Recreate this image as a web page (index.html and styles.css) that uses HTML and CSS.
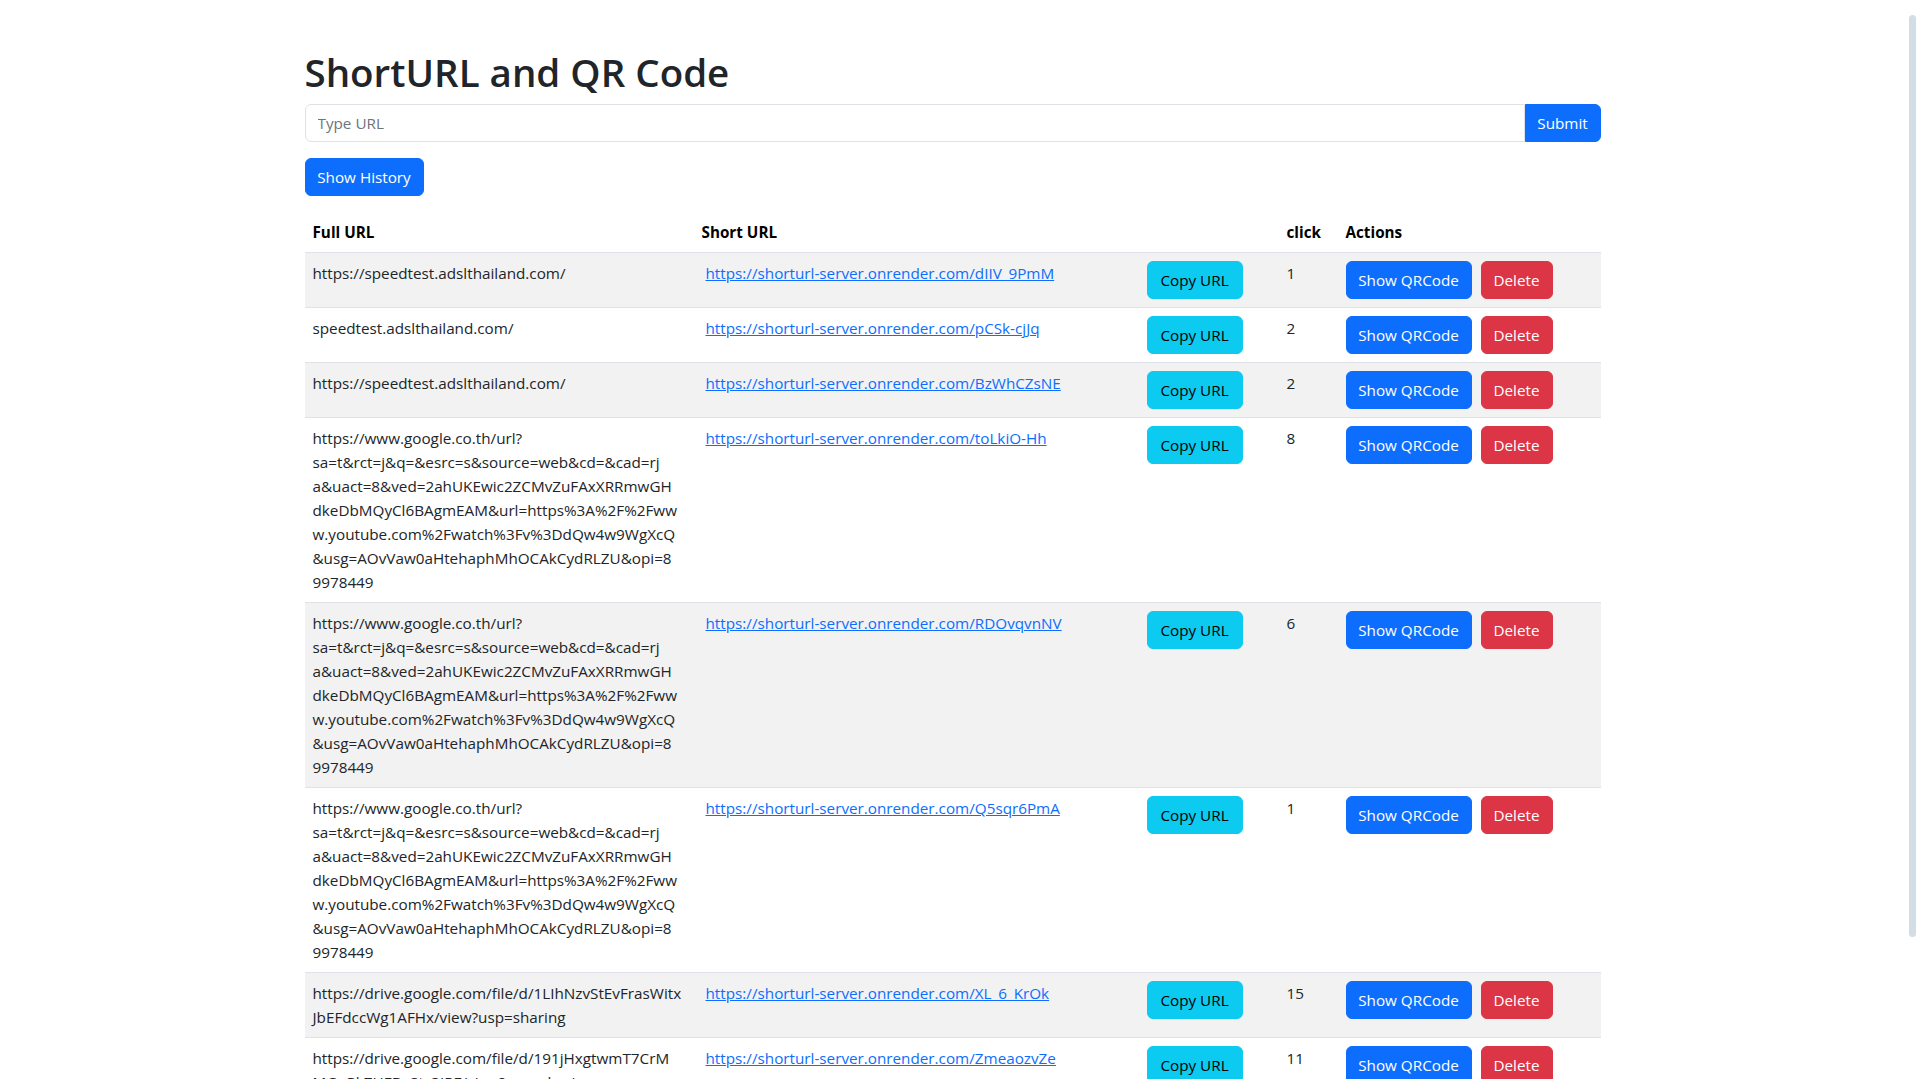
FILE: index.html
```html
<!DOCTYPE html>
<html lang="en">
<head>
<meta charset="utf-8">
<title>ShortURL and QR Code</title>
<link rel="stylesheet" href="styles.css">
</head>
<body>
<div class="page">
  <div class="container">
    <h1 class="title">ShortURL and QR Code</h1>
    <form class="input-group">
      <input class="form-control" type="text" placeholder="Type URL">
      <button class="btn btn-primary btn-submit" type="button">Submit</button>
    </form>
    <button class="btn btn-primary btn-history" type="button">Show History</button>

    <table class="table">
      <colgroup>
        <col class="c-full">
        <col class="c-short">
        <col class="c-copy">
        <col class="c-click">
        <col class="c-actions">
      </colgroup>
      <thead>
        <tr>
          <th>Full URL</th>
          <th>Short URL</th>
          <th></th>
          <th>click</th>
          <th>Actions</th>
        </tr>
      </thead>
      <tbody>
        <tr>
          <td><span class="line">https://speedtest.adslthailand.com/</span></td>
          <td class="short"><a href="#">https://shorturl-server.onrender.com/dIIV_9PmM</a></td>
          <td><button class="btn btn-info" type="button">Copy URL</button></td>
          <td>1</td>
          <td><div class="actions"><button class="btn btn-primary" type="button">Show QRCode</button><button class="btn btn-danger" type="button">Delete</button></div></td>
        </tr>
        <tr>
          <td><span class="line">speedtest.adslthailand.com/</span></td>
          <td class="short"><a href="#">https://shorturl-server.onrender.com/pCSk-cjJq</a></td>
          <td><button class="btn btn-info" type="button">Copy URL</button></td>
          <td>2</td>
          <td><div class="actions"><button class="btn btn-primary" type="button">Show QRCode</button><button class="btn btn-danger" type="button">Delete</button></div></td>
        </tr>
        <tr>
          <td><span class="line">https://speedtest.adslthailand.com/</span></td>
          <td class="short"><a href="#">https://shorturl-server.onrender.com/BzWhCZsNE</a></td>
          <td><button class="btn btn-info" type="button">Copy URL</button></td>
          <td>2</td>
          <td><div class="actions"><button class="btn btn-primary" type="button">Show QRCode</button><button class="btn btn-danger" type="button">Delete</button></div></td>
        </tr>
        <tr>
          <td><span class="line">https://www.google.co.th/url?</span><br><span class="line">sa=t&amp;rct=j&amp;q=&amp;esrc=s&amp;source=web&amp;cd=&amp;cad=rj</span><br><span class="line">a&amp;uact=8&amp;ved=2ahUKEwic2ZCMvZuFAxXRRmwGH</span><br><span class="line">dkeDbMQyCl6BAgmEAM&amp;url=https%3A%2F%2Fww</span><br><span class="line">w.youtube.com%2Fwatch%3Fv%3DdQw4w9WgXcQ</span><br><span class="line">&amp;usg=AOvVaw0aHtehaphMhOCAkCydRLZU&amp;opi=8</span><br><span class="line">9978449</span></td>
          <td class="short"><a href="#">https://shorturl-server.onrender.com/toLkiO-Hh</a></td>
          <td><button class="btn btn-info" type="button">Copy URL</button></td>
          <td>8</td>
          <td><div class="actions"><button class="btn btn-primary" type="button">Show QRCode</button><button class="btn btn-danger" type="button">Delete</button></div></td>
        </tr>
        <tr>
          <td><span class="line">https://www.google.co.th/url?</span><br><span class="line">sa=t&amp;rct=j&amp;q=&amp;esrc=s&amp;source=web&amp;cd=&amp;cad=rj</span><br><span class="line">a&amp;uact=8&amp;ved=2ahUKEwic2ZCMvZuFAxXRRmwGH</span><br><span class="line">dkeDbMQyCl6BAgmEAM&amp;url=https%3A%2F%2Fww</span><br><span class="line">w.youtube.com%2Fwatch%3Fv%3DdQw4w9WgXcQ</span><br><span class="line">&amp;usg=AOvVaw0aHtehaphMhOCAkCydRLZU&amp;opi=8</span><br><span class="line">9978449</span></td>
          <td class="short"><a href="#">https://shorturl-server.onrender.com/RDOvqvnNV</a></td>
          <td><button class="btn btn-info" type="button">Copy URL</button></td>
          <td>6</td>
          <td><div class="actions"><button class="btn btn-primary" type="button">Show QRCode</button><button class="btn btn-danger" type="button">Delete</button></div></td>
        </tr>
        <tr>
          <td><span class="line">https://www.google.co.th/url?</span><br><span class="line">sa=t&amp;rct=j&amp;q=&amp;esrc=s&amp;source=web&amp;cd=&amp;cad=rj</span><br><span class="line">a&amp;uact=8&amp;ved=2ahUKEwic2ZCMvZuFAxXRRmwGH</span><br><span class="line">dkeDbMQyCl6BAgmEAM&amp;url=https%3A%2F%2Fww</span><br><span class="line">w.youtube.com%2Fwatch%3Fv%3DdQw4w9WgXcQ</span><br><span class="line">&amp;usg=AOvVaw0aHtehaphMhOCAkCydRLZU&amp;opi=8</span><br><span class="line">9978449</span></td>
          <td class="short"><a href="#">https://shorturl-server.onrender.com/Q5sqr6PmA</a></td>
          <td><button class="btn btn-info" type="button">Copy URL</button></td>
          <td>1</td>
          <td><div class="actions"><button class="btn btn-primary" type="button">Show QRCode</button><button class="btn btn-danger" type="button">Delete</button></div></td>
        </tr>
        <tr>
          <td><span class="line">https://drive.google.com/file/d/1LIhNzvStEvFrasWitx</span><br><span class="line">JbEFdccWg1AFHx/view?usp=sharing</span></td>
          <td class="short"><a href="#">https://shorturl-server.onrender.com/XL_6_KrOk</a></td>
          <td><button class="btn btn-info" type="button">Copy URL</button></td>
          <td>15</td>
          <td><div class="actions"><button class="btn btn-primary" type="button">Show QRCode</button><button class="btn btn-danger" type="button">Delete</button></div></td>
        </tr>
        <tr>
          <td><span class="line">https://drive.google.com/file/d/191jHxgtwmT7CrM</span><br><span class="line">MGuPkZHFDz8tz3IRF/view?usp=sharing</span></td>
          <td class="short"><a href="#">https://shorturl-server.onrender.com/ZmeaozvZe</a></td>
          <td><button class="btn btn-info" type="button">Copy URL</button></td>
          <td>11</td>
          <td><div class="actions"><button class="btn btn-primary" type="button">Show QRCode</button><button class="btn btn-danger" type="button">Delete</button></div></td>
        </tr>
      </tbody>
    </table>
  </div>
</div>
<div class="scroll-thumb"></div>
</body>
</html>
```

FILE: styles.css
```css
html {
  overflow: hidden;
}

body {
  margin: 0;
  font-family: "Open Sans", "Noto Sans", "Liberation Sans", sans-serif;
  font-size: 15.25px;
  line-height: 24px;
  color: #212529;
  background: #ffffff;
}

.page {
  width: 1905px;
}

.container {
  max-width: 1320px;
  margin: 0 auto;
  padding: 48px 12px 0;
  box-sizing: border-box;
}

.title {
  margin: 0 0 8px;
  font-size: 38.5px;
  line-height: 48px;
  font-weight: 600;
  color: #212529;
}

.input-group {
  display: flex;
  margin: 0;
}

.form-control {
  flex: 1 1 auto;
  height: 38px;
  box-sizing: border-box;
  padding: 6px 12px;
  border: 1px solid #dee2e6;
  border-radius: 6px 0 0 6px;
  font-family: inherit;
  font-size: 15.25px;
  color: #212529;
  outline: none;
}

.form-control::placeholder {
  color: #6c757d;
}

.btn {
  display: inline-block;
  box-sizing: border-box;
  height: 38px;
  padding: 6px 12px;
  border: 1px solid transparent;
  border-radius: 6px;
  font-family: inherit;
  font-size: 15.25px;
  line-height: 24px;
  white-space: nowrap;
  cursor: pointer;
}

.btn-primary {
  background: #0d6efd;
  border-color: #0d6efd;
  color: #ffffff;
}

.btn-info {
  background: #0dcaf0;
  border-color: #0dcaf0;
  color: #000000;
}

.btn-danger {
  background: #dc3545;
  border-color: #dc3545;
  color: #ffffff;
}

.btn-submit {
  border-radius: 0 6px 6px 0;
  width: 76px;
  padding: 6px 0;
}

.btn-history {
  margin-top: 16px;
  width: 119px;
  padding: 6px 0;
}

.table {
  width: 100%;
  margin-top: 16px;
  border-collapse: collapse;
  table-layout: fixed;
  vertical-align: top;
}

.c-full { width: 389px; }
.c-short { width: 445px; }
.c-copy { width: 140px; }
.c-click { width: 59px; }
.c-actions { width: 263px; }

.table th,
.table td {
  padding: 8px;
  border-bottom: 1px solid #dee2e6;
  text-align: left;
  vertical-align: top;
}

.table th {
  font-weight: 700;
  color: #000000;
}

.table tbody tr:nth-child(odd) td {
  background: #f2f2f2;
}

.line {
  white-space: nowrap;
}

.table td.short {
  padding-left: 12px;
}

.short a {
  color: #0d6efd;
  text-decoration: underline;
  white-space: nowrap;
}

.table .btn-info {
  width: 96px;
  padding: 6px 0;
  margin-left: 0;
}

.actions {
  display: flex;
  gap: 9px;
}

.actions .btn-primary {
  width: 126px;
  padding: 6px 0;
}

.actions .btn-danger {
  width: 72px;
  padding: 6px 0;
}

.scroll-thumb {
  position: fixed;
  top: 15px;
  right: 3px;
  width: 7px;
  height: 922px;
  border-radius: 4px;
  background: #d3dde6;
}
```
